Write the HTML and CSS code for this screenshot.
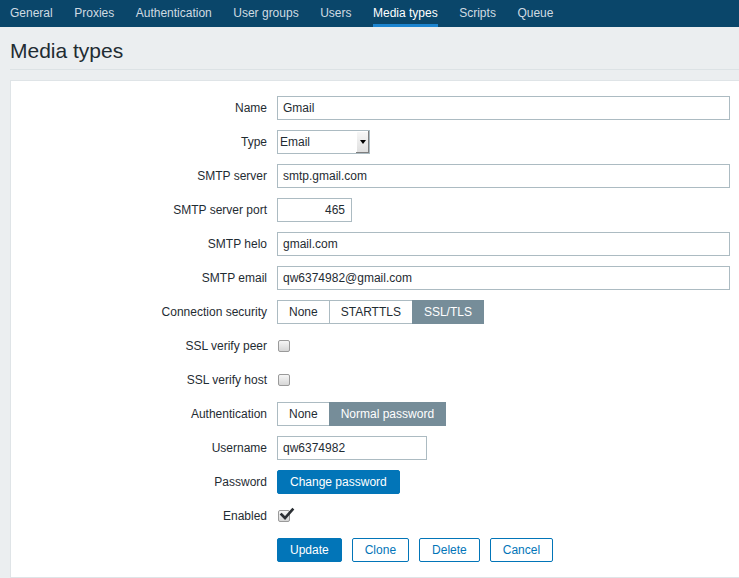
FILE: index.html
```html
<!DOCTYPE html>
<html lang="en">
<head>
<meta charset="utf-8">
<title>Media types</title>
<link rel="stylesheet" href="styles.css">
</head>
<body>
<nav class="subnav">
  <ul>
    <li><a href="#">General</a></li>
    <li><a href="#">Proxies</a></li>
    <li><a href="#">Authentication</a></li>
    <li><a href="#">User groups</a></li>
    <li><a href="#">Users</a></li>
    <li><a href="#" class="active">Media types</a></li>
    <li><a href="#">Scripts</a></li>
    <li><a href="#">Queue</a></li>
  </ul>
</nav>
<main class="content">
  <header class="page-header"><h1>Media types</h1></header>
  <section class="panel">
    <div class="form">
      <div class="label">Name</div>
      <div class="field"><div class="input w-wide">Gmail</div></div>

      <div class="label">Type</div>
      <div class="field">
        <div class="select">
          <span class="select-value">Email</span>
          <span class="select-btn"><span class="select-arrow"></span></span>
        </div>
      </div>

      <div class="label">SMTP server</div>
      <div class="field"><div class="input w-wide">smtp.gmail.com</div></div>

      <div class="label">SMTP server port</div>
      <div class="field"><div class="input w-port">465</div></div>

      <div class="label">SMTP helo</div>
      <div class="field"><div class="input w-wide">gmail.com</div></div>

      <div class="label">SMTP email</div>
      <div class="field"><div class="input w-wide">qw6374982@gmail.com</div></div>

      <div class="label">Connection security</div>
      <div class="field">
        <div class="seg">
          <span>None</span><span>STARTTLS</span><span class="on">SSL/TLS</span>
        </div>
      </div>

      <div class="label">SSL verify peer</div>
      <div class="field"><span class="checkbox"></span></div>

      <div class="label">SSL verify host</div>
      <div class="field"><span class="checkbox"></span></div>

      <div class="label">Authentication</div>
      <div class="field">
        <div class="seg">
          <span>None</span><span class="on">Normal password</span>
        </div>
      </div>

      <div class="label">Username</div>
      <div class="field"><div class="input w-user">qw6374982</div></div>

      <div class="label">Password</div>
      <div class="field"><button class="btn" type="button">Change password</button></div>

      <div class="label">Enabled</div>
      <div class="field">
        <span class="checkbox checked">
          <svg class="check" width="16" height="14" viewBox="0 0 16 14"><path d="M2.5 7.5 L6 11 L13.5 2.5" fill="none" stroke="#2b2f33" stroke-width="2.6" stroke-linecap="square" stroke-linejoin="miter"/></svg>
        </span>
      </div>

      <div class="label"></div>
      <div class="field buttons">
        <button class="btn" type="button">Update</button>
        <button class="btn btn-alt" type="button">Clone</button>
        <button class="btn btn-alt" type="button">Delete</button>
        <button class="btn btn-alt" type="button">Cancel</button>
      </div>
    </div>
  </section>
</main>
</body>
</html>
```

FILE: styles.css
```css
* { box-sizing: border-box; }

body {
  margin: 0;
  background: #ebeef0;
  font-family: "Liberation Sans", Arial, sans-serif;
  font-size: 12px;
  color: #1f2c33;
  overflow: hidden;
}

.subnav {
  background: #0a466a;
  height: 27px;
}
.subnav ul {
  list-style: none;
  margin: 0;
  padding: 0 0 0 10px;
  display: flex;
  gap: 21.5px;
  height: 27px;
}
.subnav a {
  display: block;
  height: 27px;
  padding-top: 6px;
  line-height: 14px;
  color: #d0dbe2;
  text-decoration: none;
}
.subnav a.active {
  color: #ffffff;
  border-bottom: 3px solid #1b84d0;
}

.content {
  padding-left: 10px;
}
.page-header {
  padding: 12px 0 6px;
  border-bottom: 1px solid #dce2e5;
}
.page-header h1 {
  margin: 0;
  font-size: 21px;
  line-height: 24px;
  font-weight: normal;
  color: #1f2c33;
}

.panel {
  margin: 10px -10px 0 0;
  background: #ffffff;
  border: 1px solid #dfe4e7;
  padding: 15px 0;
}

.form {
  display: grid;
  grid-template-columns: 256px 1fr;
  column-gap: 10px;
  row-gap: 10px;
}
.label {
  text-align: right;
  line-height: 24px;
  min-height: 24px;
}
.field {
  display: flex;
  align-items: center;
  min-height: 24px;
}

.input {
  height: 24px;
  border: 1px solid #acbbc2;
  padding: 0 5px;
  line-height: 22px;
  background: #fff;
  white-space: nowrap;
}
.w-wide { width: 453px; }
.w-port { width: 75px; text-align: right; padding-right: 6px; }
.w-user { width: 150px; }

.select {
  width: 93px;
  height: 24px;
  border: 1px solid #acbbc2;
  display: flex;
  background: #fff;
}
.select-value {
  flex: 1;
  padding-left: 2px;
  line-height: 22px;
}
.select-btn {
  width: 13px;
  height: 22px;
  background: linear-gradient(#f8f8f8, #dedede);
  box-shadow: inset -1px -1px 0 #7e7e7e, inset 1px 1px 0 #ffffff;
  display: flex;
  align-items: center;
  justify-content: center;
  padding-bottom: 1px;
}
.select-arrow {
  width: 0;
  height: 0;
  border-left: 3px solid transparent;
  border-right: 3px solid transparent;
  border-top: 4px solid #000;
}

.seg {
  display: flex;
}
.seg span {
  height: 24px;
  line-height: 22px;
  padding: 0 11px;
  border: 1px solid #acbbc2;
  margin-left: -1px;
  background: #fff;
  white-space: nowrap;
}
.seg span:first-child { margin-left: 0; }
.seg span.on {
  background: #768d99;
  border-color: #768d99;
  color: #ffffff;
}

.checkbox {
  position: relative;
  display: inline-block;
  width: 12px;
  height: 12px;
  margin-left: 1px;
  border: 1px solid #9a9a9a;
  border-radius: 2px;
  background: linear-gradient(#f6f6f6, #d6d6d6);
}
.checkbox .check {
  position: absolute;
  left: 0;
  top: -4px;
}

.btn {
  height: 24px;
  padding: 0 12px;
  border: 1px solid #0275b8;
  border-radius: 2px;
  background: #0275b8;
  color: #ffffff;
  font-family: "Liberation Sans", Arial, sans-serif;
  font-size: 12px;
  line-height: 22px;
  cursor: pointer;
}
.btn-alt {
  background: #ffffff;
  color: #0275b8;
}
.buttons {
  gap: 10px;
}
```
